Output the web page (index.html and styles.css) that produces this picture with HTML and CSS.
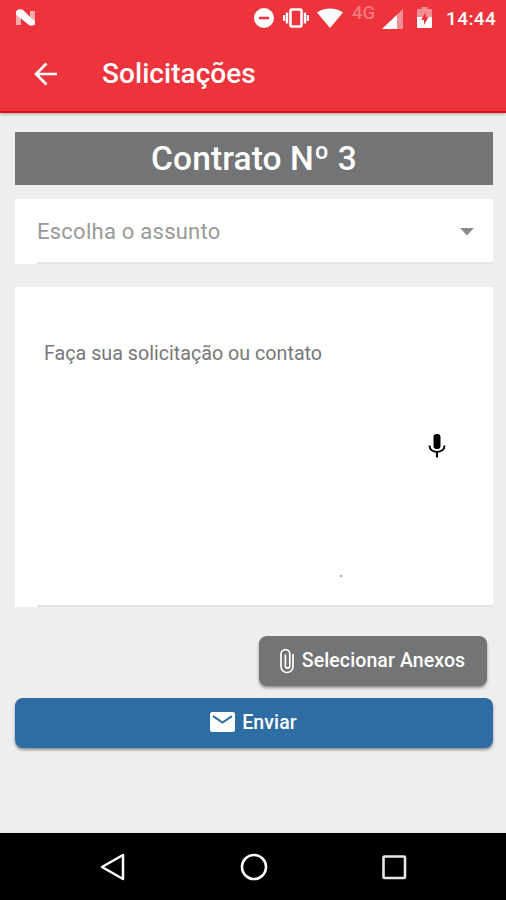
FILE: index.html
```html
<!DOCTYPE html>
<html lang="pt-BR">
<head>
    <meta charset="UTF-8">
    <meta name="viewport" content="width=device-width, initial-scale=1.0">
    <title>Solicitações</title>
    <link rel="stylesheet" href="styles.css">
</head>
<body>
    <header class="header">
        <!-- Status bar -->
        <div class="status-bar">
            <svg class="icon-n" width="22" height="18" viewBox="0 0 22 18">
                <path d="M1 2v14h5V2zM15 2h5v14h-5z" fill="#f9a9ae"/>
                <path d="M3 .500h4.500L20 12.500V15l-2 1.500h-3.500L1 5.500V2.500z" fill="#fff"/>
            </svg>
            <svg class="icon-dnd" width="20" height="20" viewBox="0 0 20 20">
                <circle cx="10" cy="10" r="10" fill="#fff"/>
                <path d="M5 10h10" stroke="#ed333b" stroke-width="2.6"/>
            </svg>
            <svg class="icon-vibrate" width="26" height="20" viewBox="0 0 26 20">
                <rect x="7.500" y="1.5" width="11" height="17" rx="1" fill="none" stroke="#fff" stroke-width="2.6"/>
                <path d="M4 4.500v11M22 4.500v11M1 7v6M25 7v6" stroke="#fff" stroke-width="2.400"/>
            </svg>
            <svg class="icon-wifi" width="26" height="20" viewBox="0 0 26 20">
                <path d="M0 4.5C7.500-.7 18.500-.7 26 4.500L13 20z" fill="#fff"/>
            </svg>
            <span class="network">4G</span>
            <svg class="icon-signal" width="21" height="20" viewBox="0 0 21 20">
                <path d="M0 20L21 0v20z" fill="#f58e93"/>
                <path d="M0 20L15 5.700V20z" fill="#fff"/>
            </svg>
            <svg class="icon-battery" width="15" height="21" viewBox="0 0 15 21">
                <path d="M4.500 0h6v2H14q1 0 1 1v8H0V3q0-1 1-1h3.500z" fill="#f58e93"/>
                <path d="M0 10h15v10q0 1-1 1H1q-1 0-1-1z" fill="#fff"/>
                <path d="M8.700 5L4 13h3v5l4.500-8H8.700z" fill="#ed333b"/>
            </svg>
            <span class="clock">14:44</span>
        </div>
        <!-- App bar -->
        <div class="app-bar">
            <svg class="icon-back" width="24" height="24" viewBox="0 0 24 24">
                <path d="M23 12H2.500M12.500 1.500L2 12l10.500 10.500" fill="none" stroke="#fff" stroke-width="2.700"/>
            </svg>
            <h1 class="page-title">Solicitações</h1>
        </div>
    </header>

    <main class="content">
        <h2 class="contract">Contrato Nº 3</h2>

        <div class="field subject">
            <span class="subject-label">Escolha o assunto</span>
            <svg width="14" height="8" viewBox="0 0 14 8">
                <path d="M0 0h14L7 7.500z" fill="#8a8a8a"/>
            </svg>
        </div>

        <div class="field message">
            <span class="message-label">Faça sua solicitação ou contato</span>
            <svg class="icon-mic" width="18" height="26" viewBox="0 0 18 26">
                <rect x="5.500" y="1" width="7" height="15" rx="3" fill="#000"/>
                <path d="M1.500 12.500c0 8.500 15 8.500 15 0M9 19v5.500" fill="none" stroke="#000" stroke-width="2"/>
            </svg>
            <span class="dot"></span>
        </div>

        <div class="actions">
            <button class="btn btn-attach">
                <svg width="16" height="26" viewBox="0 0 16 26">
                    <path d="M14 6v12.500a6 6 0 0 1-12 0V6a4.400 4.400 0 0 1 8.800 0v12a2.200 2.200 0 0 1-4.400 0V6.500" fill="none" stroke="#fff" stroke-width="1.700"/>
                </svg>
                <span>Selecionar Anexos</span>
            </button>
            <button class="btn btn-send">
                <svg width="25" height="20" viewBox="0 0 25 20">
                    <rect width="25" height="20" rx="2.200" fill="#fff"/>
                    <path d="M3 4.200l9.500 6.300L22 4.200" fill="none" stroke="#2e6da4" stroke-width="2"/>
                </svg>
                <span class="send-label">Enviar</span>
            </button>
        </div>
    </main>

    <!-- Android navigation -->
    <nav class="nav-bar">
        <svg width="28" height="28" viewBox="0 0 28 28">
            <path d="M24 2v24L3 14z" fill="none" stroke="#fff" stroke-width="2.500" stroke-linejoin="round"/>
        </svg>
        <svg width="28" height="28" viewBox="0 0 28 28">
            <circle cx="14" cy="14" r="12" fill="none" stroke="#fff" stroke-width="2.600"/>
        </svg>
        <svg width="28" height="28" viewBox="0 0 28 28">
            <rect x="3.500" y="3.500" width="21.500" height="21.500" rx="1" fill="none" stroke="#e8e8e8" stroke-width="2.600"/>
        </svg>
    </nav>
</body>
</html>
```

FILE: styles.css
```css
* {
    box-sizing: border-box;
}
body {
    margin: 0;
    height: 900px;
    display: flex;
    flex-direction: column;
    background-color: #eee;
    font-family: Roboto, sans-serif;
    overflow: hidden;
}
svg {
    display: block;
    flex-shrink: 0;
}

/* header */
.header {
    height: 113px;
    background-color: #ed333b;
    border-bottom: 2px solid #dc1018;
    box-shadow: 0 1px 3px rgba(0, 0, 0, 0.3);
    color: #fff;
}
.status-bar {
    height: 35px;
    display: flex;
    align-items: center;
    padding-left: 15px;
}
.icon-dnd {
    margin-left: 217px;
}
.icon-vibrate {
    margin-left: 9px;
}
.icon-wifi {
    margin-left: 8px;
}
.network {
    width: 24px;
    margin: 0 6px 9px 9px;
    font-size: 18.5px;
    font-weight: 500;
    line-height: 20px;
    color: #f4777d;
}
.icon-signal {
    margin-top: 2px;
}
.icon-battery {
    margin-left: 14px;
}
.clock {
    margin-left: 14px;
    margin-top: 2px;
    font-size: 19px;
    font-weight: 500;
    letter-spacing: 0.4px;
}
.app-bar {
    height: 78px;
    display: flex;
    align-items: center;
    padding-left: 34px;
}
.page-title {
    margin: 0 0 2px 44px;
    font-size: 28px;
    font-weight: 500;
    letter-spacing: 0.05px;
}

/* form */
.content {
    flex: 1;
    padding: 19px 13px 0 15px;
}
.contract {
    margin: 0 0 14px;
    height: 53px;
    background-color: #727475;
    color: #fff;
    font-size: 33.5px;
    font-weight: 500;
    letter-spacing: 0.1px;
    line-height: 54px;
    text-align: center;
}
.field {
    position: relative;
    background-color: #fff;
}
.field::after {
    content: "";
    position: absolute;
    left: 22px;
    right: 0;
    bottom: 0;
    height: 2px;
    background-color: #e4e4e4;
}
.subject {
    height: 65px;
    display: flex;
    align-items: center;
    justify-content: space-between;
    padding: 0 19px 0 22px;
    margin-bottom: 23px;
}
.subject-label {
    font-size: 22px;
    letter-spacing: 0.25px;
    color: #999;
}
.message {
    height: 320px;
    display: flex;
    flex-direction: column;
    padding: 55px 47px 0 29px;
}
.message-label {
    font-size: 19.7px;
    line-height: 24px;
    color: #777;
}
.icon-mic {
    align-self: flex-end;
    margin-top: 67px;
}
.dot {
    width: 2px;
    height: 2px;
    margin: 116px 0 0 296px;
    background-color: #aaa;
}

/* buttons */
.actions {
    display: flex;
    flex-direction: column;
    gap: 12px;
    padding-top: 29px;
}
.btn {
    height: 50px;
    display: flex;
    align-items: center;
    justify-content: center;
    gap: 7px;
    border: none;
    border-radius: 8px;
    padding: 0 1px 3px 0;
    color: #fff;
    font-family: inherit;
    font-size: 19.5px;
    font-weight: 500;
    letter-spacing: 0.1px;
    box-shadow: 0 2px 3px rgba(0, 0, 0, 0.4);
}
.btn-attach {
    align-self: flex-end;
    width: 228px;
    margin-right: 6px;
    padding: 0 2px 1px 0;
    background-color: #727475;
}
.btn-send {
    background-color: #2e6da4;
}
.send-label {
    padding-top: 2px;
}

/* system navigation */
.nav-bar {
    height: 67px;
    display: flex;
    justify-content: space-between;
    align-items: center;
    padding: 0 98px 0 99px;
    background-color: #000;
}
```
